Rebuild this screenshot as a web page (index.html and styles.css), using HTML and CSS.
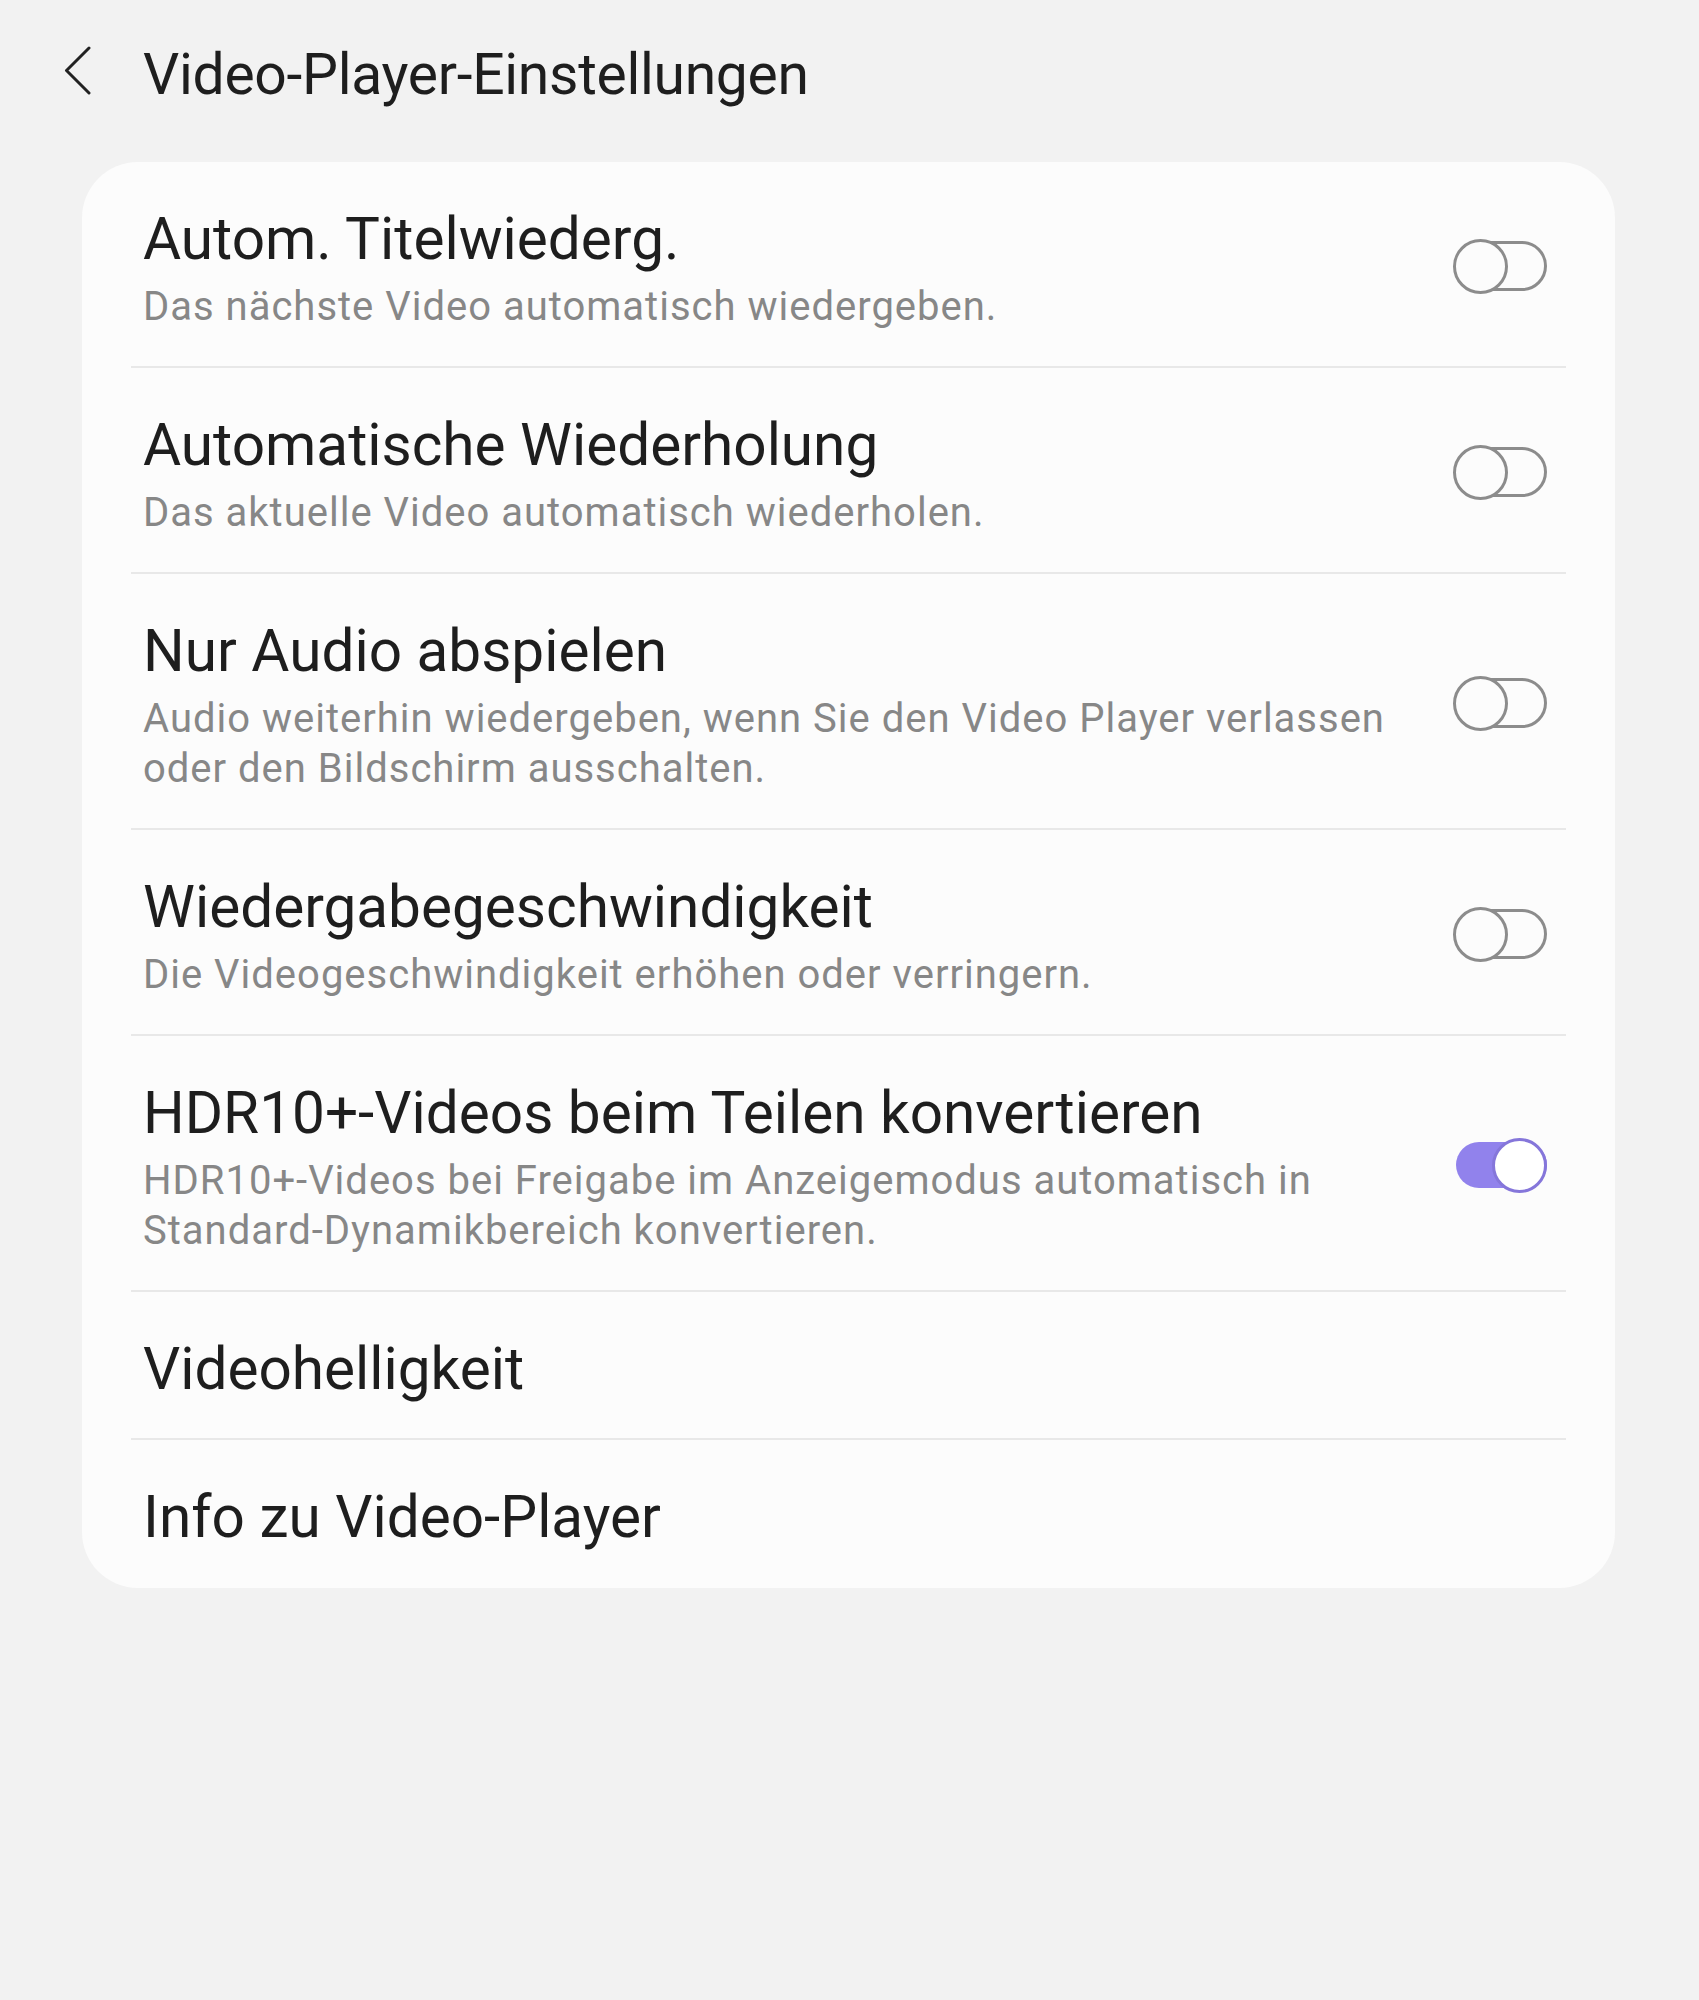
FILE: index.html
```html
<!DOCTYPE html>
<html lang="de">
<head>
<meta charset="utf-8">
<title>Video-Player-Einstellungen</title>
<link rel="stylesheet" href="styles.css">
</head>
<body>
<header class="appbar">
  <svg class="back" width="30" height="50" viewBox="0 0 30 50" aria-hidden="true">
    <path d="M27 3 L4.5 25.5 L27 48" fill="none" stroke="#222" stroke-width="3" stroke-linecap="round" stroke-linejoin="round"/>
  </svg>
  <h1 class="appbar-title">Video-Player-Einstellungen</h1>
</header>

<main class="card">
  <div class="row">
    <div class="text">
      <div class="title">Autom. Titelwiederg.</div>
      <div class="sub">Das nächste Video automatisch wiedergeben.</div>
    </div>
    <div class="toggle"><span class="track"></span><span class="knob"></span></div>
  </div>
  <div class="row">
    <div class="text">
      <div class="title">Automatische Wiederholung</div>
      <div class="sub">Das aktuelle Video automatisch wiederholen.</div>
    </div>
    <div class="toggle"><span class="track"></span><span class="knob"></span></div>
  </div>
  <div class="row">
    <div class="text">
      <div class="title">Nur Audio abspielen</div>
      <div class="sub">Audio weiterhin wiedergeben, wenn Sie den Video Player verlassen<br>oder den Bildschirm ausschalten.</div>
    </div>
    <div class="toggle"><span class="track"></span><span class="knob"></span></div>
  </div>
  <div class="row">
    <div class="text">
      <div class="title">Wiedergabegeschwindigkeit</div>
      <div class="sub">Die Videogeschwindigkeit erhöhen oder verringern.</div>
    </div>
    <div class="toggle"><span class="track"></span><span class="knob"></span></div>
  </div>
  <div class="row">
    <div class="text">
      <div class="title">HDR10+-Videos beim Teilen konvertieren</div>
      <div class="sub">HDR10+-Videos bei Freigabe im Anzeigemodus automatisch in<br>Standard-Dynamikbereich konvertieren.</div>
    </div>
    <div class="toggle on"><span class="track"></span><span class="knob"></span></div>
  </div>
  <div class="row">
    <div class="text">
      <div class="title">Videohelligkeit</div>
    </div>
  </div>
  <div class="row">
    <div class="text">
      <div class="title">Info zu Video-Player</div>
    </div>
  </div>
</main>
</body>
</html>
```
FILE: styles.css
```css
html, body {
  margin: 0;
  padding: 0;
}
body {
  background: #f2f2f2;
  font-family: Roboto, "Noto Sans", "Liberation Sans", sans-serif;
  color: #1e1e1e;
  width: 1699px;
  min-height: 2000px;
}

.appbar {
  display: flex;
  align-items: flex-start;
  padding: 40px 0 0 62px;
  height: 70px;
}
.back {
  margin-top: 5px;
  flex: none;
}
.appbar-title {
  margin: 0 0 0 51px;
  font-size: 57px;
  font-weight: 400;
  line-height: 70px;
  letter-spacing: -0.3px;
  color: #1e1e1e;
}

.card {
  margin: 52px 0 0 82px;
  width: 1533px;
  background: #fcfcfc;
  border-radius: 56px;
  padding: 0 49px;
  box-sizing: border-box;
}

.row {
  display: flex;
  align-items: center;
  padding: 42px 19px 34px 12px;
  border-bottom: 2px solid #e8e8e8;
}
.row:last-child {
  border-bottom: none;
  padding-bottom: 36px;
}
.text {
  flex: 1;
  min-width: 0;
}
.title {
  font-size: 58.5px;
  line-height: 70px;
  color: #1e1e1e;
}
.sub {
  margin-top: 8px;
  font-size: 40px;
  line-height: 50px;
  letter-spacing: 1px;
  color: #878787;
}

.toggle {
  position: relative;
  flex: none;
  width: 94px;
  height: 55px;
  margin-top: -4px;
}
.toggle .track {
  position: absolute;
  left: 2px;
  top: 2.5px;
  width: 92px;
  height: 50px;
  box-sizing: border-box;
  border: 3px solid #8c8c8c;
  border-radius: 25px;
}
.toggle .knob {
  position: absolute;
  left: 0;
  top: 0;
  width: 55px;
  height: 55px;
  box-sizing: border-box;
  border: 3px solid #8c8c8c;
  border-radius: 50%;
  background: #fcfcfc;
}
.toggle.on .track {
  left: 3px;
  top: 4.5px;
  width: 91px;
  height: 46px;
  border: none;
  border-radius: 23px;
  background: #9182ec;
}
.toggle.on .knob {
  left: auto;
  right: 0;
  border-color: #8576da;
  background: #ffffff;
}
```
